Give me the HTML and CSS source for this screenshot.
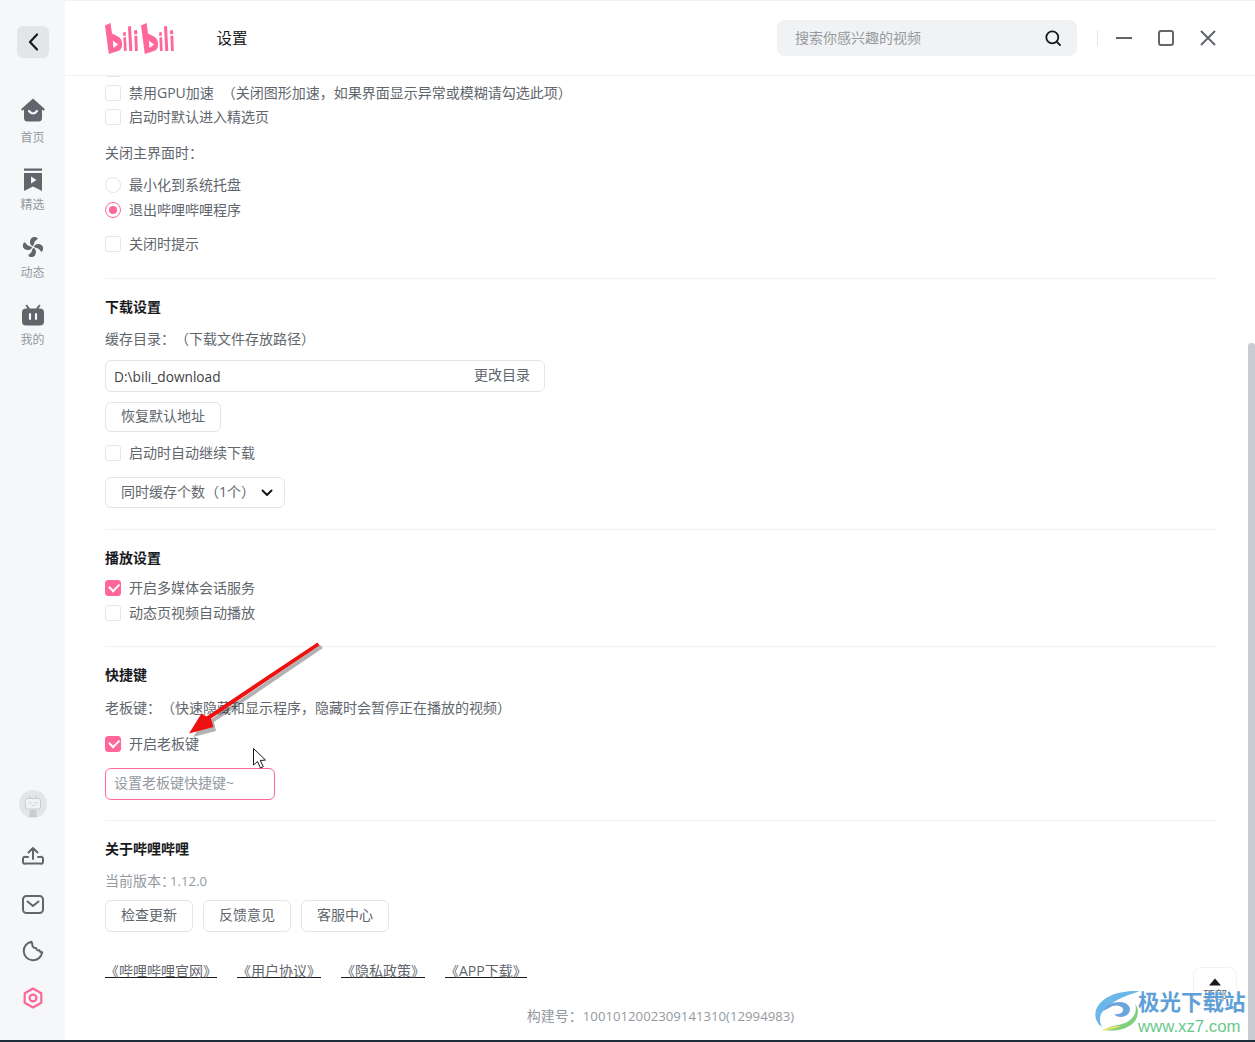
FILE: index.html
```html
<!DOCTYPE html>
<html lang="zh-CN">
<head>
<meta charset="utf-8">
<title>设置</title>
<link rel="stylesheet" href="styles.css">
</head>
<body>
<div class="app">
  <aside class="sidebar">
    <button class="back"><svg width="32" height="32" viewBox="0 0 32 32"><path d="M20 8.500 13 16l7 7.500" fill="none" stroke="#18191c" stroke-width="2.200" stroke-linecap="round" stroke-linejoin="round"/></svg></button>
    <nav class="nav">
      <a class="nav-item"><svg class="up" width="28" height="28" viewBox="0 0 28 28"><path d="M14 2.500 2 13.200l1.500 1.600L5 13.600V22a3.500 3.500 0 0 0 3.500 3.500h11A3.500 3.500 0 0 0 23 22v-8.400l1.500 1.200L26 13.200Z" fill="#61666d"/><path d="M10 15q4 5 8 0" fill="none" stroke="#f6f7f9" stroke-width="2.200" stroke-linecap="round"/></svg><span>首页</span></a>
      <a class="nav-item"><svg class="down" width="28" height="28" viewBox="0 0 28 28"><path d="M5 2.500h18v2.300H5zM5 7h18v18l-9-4.500L5 25z" fill="#61666d"/><path d="M12 10.500v7l5.500-3.500z" fill="#f6f7f9"/></svg><span>精选</span></a>
      <a class="nav-item"><svg class="down" width="28" height="28" viewBox="0 0 28 28"><g fill="#61666d" transform="translate(14 14) scale(.84) translate(-14 -14)"><path d="M13.500 13C10 11 9.500 7 12 3.500c2-2.500 7-1.500 7.500 0 .4 1.600-3.500 3-4 5-.3 1.500-.5 3-2 4.500Z"/><path d="M15 13.500c2-3.500 6-4 9.500-1.500 2.500 2 1.500 7 0 7.500-1.600.4-3-3.500-5-4-1.500-.3-3-.5-4.500-2Z"/><path d="M14.500 15c3.500 2 4 6 1.500 9.500-2 2.500-7 1.500-7.500 0-.4-1.600 3.500-3 4-5 .3-1.500.5-3 2-4.500Z"/><path d="M13 14.500c-2 3.500-6 4-9.500 1.500-2.500-2-1.500-7 0-7.500 1.600-.4 3 3.500 5 4 1.500.3 3 .5 4.500 2Z"/></g></svg><span>动态</span></a>
      <a class="nav-item"><svg class="down" width="28" height="28" viewBox="0 0 28 28"><path d="M8 3.500 11 7.500h6l3-4 1.500 1L19.500 7.500H21a4 4 0 0 1 4 4V20.500a4 4 0 0 1-4 4H7a4 4 0 0 1-4-4v-9a4 4 0 0 1 4-4h1.500l-2-3Z" fill="#61666d"/><path d="M11 13v5M17 13v5" stroke="#f6f7f9" stroke-width="2.200" stroke-linecap="round"/></svg><span>我的</span></a>
    </nav>
    <div class="tools">
      <div class="avatar"><svg width="28" height="28" viewBox="0 0 28 28"><circle cx="14" cy="14" r="14" fill="#e3e5e7"/><path d="M10 6l2 2.500M18 6l-2 2.500" stroke="#c9ccd0" stroke-width="1.200"/><rect x="6.500" y="8.500" width="15" height="10.500" rx="2" fill="#f1f2f3" stroke="#c9ccd0"/><path d="M9.500 13h3M15.500 13h3M12.500 15.500h3" stroke="#c9ccd0"/><path d="M10 27l1-7h6l1 7z" fill="#c9ccd0"/></svg></div>
      <div class="tool"><svg width="24" height="24" viewBox="0 -2 24 24"><path d="M12 15V4M7.500 8.500 12 4l4.500 4.500M7 13H4.500A1.800 1.800 0 0 0 2 15v2.800A1.800 1.800 0 0 0 4.500 19.600h15a1.800 1.800 0 0 0 2.500-1.800V15a1.800 1.800 0 0 0-2.500-2H17" fill="none" stroke="#61666d" stroke-width="2" stroke-linecap="round" stroke-linejoin="round"/></svg></div>
      <div class="tool"><svg width="24" height="24" viewBox="0 -2 24 24"><rect x="2" y="4" width="20" height="17" rx="3.500" fill="none" stroke="#61666d" stroke-width="2"/><path d="M6.500 9.500 12 14l5.500-4.500" fill="none" stroke="#61666d" stroke-width="2" stroke-linecap="round" stroke-linejoin="round"/></svg></div>
      <div class="tool"><svg width="24" height="24" viewBox="0 -1 24 24"><path d="M10.500 2.800a9.300 9.300 0 1 0 10.700 10.500c-1.500 0-2.500-.8-2.700-2-1.800.4-3.300-.6-3.500-2.300-2 .2-3.700-1.200-3.700-3.200 0-1 0-2-.8-3Z" fill="none" stroke="#61666d" stroke-width="2" stroke-linejoin="round"/></svg></div>
      <div class="tool"><svg width="24" height="24" viewBox="0 0 24 24"><path d="M12 2.500 20.300 7.200v9.600L12 21.500 3.700 16.800V7.200Z" fill="none" stroke="#ff6699" stroke-width="2.200" stroke-linejoin="round"/><circle cx="12" cy="12" r="3.400" fill="none" stroke="#ff6699" stroke-width="2.200"/></svg></div>
    </div>
  </aside>

  <main class="main">
    <header class="topbar">
      <svg class="logo" width="70" height="32" viewBox="0 0 70 32"><g fill="#ff6699"><g id="bili"><path fill-rule="evenodd" d="M0 2.500 5.500 0 7 10.500 13 13.500Q17.500 16 17 22.500 16.500 27 13 28L3.800 31ZM7.800 17.500 8.500 25 13 21.500Z"/><path d="M18 9.500 20.700 9 21 12.500 18.300 13ZM18.400 14.500 21 14 21.700 28H19ZM23 3.500 26 3 27.300 28H24.300ZM29 7.500 32 7 32.300 11 29.300 11.500ZM29.400 13 32.300 12.500 32.800 28H30Z"/></g><use href="#bili" x="36"/></g></svg>
      <h1 class="page-title">设置</h1>
      <div class="search"><span>搜索你感兴趣的视频</span><svg width="20" height="20" viewBox="0 0 20 20"><circle cx="9.300" cy="9.300" r="6" fill="none" stroke="#18191c" stroke-width="1.800"/><path d="m13.800 13.800 3.200 3.200" stroke="#18191c" stroke-width="1.800" stroke-linecap="round"/></svg></div>
      <i class="divider"></i>
      <div class="win">
        <svg width="16" height="16" viewBox="0 0 16 16"><path d="M0 8h16" stroke="#61666d" stroke-width="2"/></svg>
        <svg width="16" height="16" viewBox="0 0 16 16"><rect x="1" y="1" width="14" height="14" rx="2" fill="none" stroke="#61666d" stroke-width="2"/></svg>
        <svg width="16" height="16" viewBox="0 0 16 16"><path d="m1 1 14 14M15 1 1 15" stroke="#61666d" stroke-width="2"/></svg>
      </div>
    </header>

    <div class="content">
      <div class="scroller">
        <label class="row"><span class="box"></span></label>
        <label class="row"><span class="box"></span><span>禁用GPU加速<span class="note">（关闭图形加速，如果界面显示异常或模糊请勾选此项）</span></span></label>
        <label class="row"><span class="box"></span>启动时默认进入精选页</label>
        <p class="line sp-12">关闭主界面时：</p>
        <label class="row row-25 sp-7"><span class="box round"></span>最小化到系统托盘</label>
        <label class="row row-25"><span class="box round on"></span>退出哔哩哔哩程序</label>
        <label class="row sp-10"><span class="box"></span>关闭时提示</label>
        <hr class="rule">

        <h2 class="heading">下载设置</h2>
        <p class="line sp-8">缓存目录：（下载文件存放路径）</p>
        <div class="field dir sp-9"><span class="path latin">D:\bili_download</span><span>更改目录</span></div>
        <button class="btn h30 sp-10">恢复默认地址</button>
        <label class="row sp-9"><span class="box"></span>启动时自动继续下载</label>
        <div class="select sp-12"><span>同时缓存个数（1个）</span><svg width="12" height="8" viewBox="0 0 12 8"><path d="m1.500 1.500 4.500 4.500 4.500-4.500" fill="none" stroke="#18191c" stroke-width="2" stroke-linecap="round" stroke-linejoin="round"/></svg></div>
        <hr class="rule r21">

        <h2 class="heading">播放设置</h2>
        <label class="row row-25 sp-5"><span class="box tick"></span>开启多媒体会话服务</label>
        <label class="row row-25"><span class="box"></span>动态页视频自动播放</label>
        <hr class="rule r21">

        <h2 class="heading">快捷键</h2>
        <p class="line sp-9">老板键：（快速隐藏和显示程序，隐藏时会暂停正在播放的视频）</p>
        <label class="row sp-12"><span class="box tick"></span>开启老板键</label>
        <div class="field boss sp-12">设置老板键快捷键~</div>
        <hr class="rule r20">

        <h2 class="heading">关于哔哩哔哩</h2>
        <p class="line muted sp-8">当前版本<span class="trim">：</span><span class="latin">1.12.0</span></p>
        <div class="btn-row sp-7">
          <button class="btn">检查更新</button>
          <button class="btn">反馈意见</button>
          <button class="btn">客服中心</button>
        </div>
        <div class="links">
          <a>《哔哩哔哩官网》</a><a>《用户协议》</a><a>《隐私政策》</a><a>《APP下载》</a>
        </div>
        <p class="build">构建号：<span class="latin">1001012002309141310(12994983)</span></p>
      </div>
    </div>
  </main>
</div>

<div class="scrollbar"></div>
<div class="to-top"><svg width="14" height="8" viewBox="0 0 14 8"><path d="M7 .5 13 7.500H1Z" fill="#18191c"/></svg><span>顶部</span></div>

<svg class="annot" width="1255" height="1042" viewBox="0 0 1255 1042">
  <path d="M323 648 214 722 216 731 193 737 205 719 210 720 320 645Z" fill="#000" opacity=".3"/>
  <path d="M317.500 642.500 319.500 645.500 211 718.500 213.500 727 189 733.500 201.500 713.500 206.500 716.500Z" fill="#ee1111"/>
  <path d="M253.500 748.500V765l4-3.500 3 6.500 2.800-1.300-3-6.200 5.200-.5Z" fill="#fff" stroke="#18191c" stroke-width="1"/>
</svg>

<div class="mark">
  <svg width="46" height="42" viewBox="0 0 46 42"><path d="M45 1C25 0 6 6 1 20c-2 7 1 14 6 17 -3-6-3-12 2-17C17 11 30 6 45 1Z" fill="#6bb7ea"/><path d="M14 18c5-4 13-3 14 1 1 3-3 6-9 5 3 4 11 4 15-1 3-5-1-11-9-11-8 0-14 3-17 9Z" fill="#6aa4dd"/><path d="M40 14c3 8-2 17-13 20-7 2-13 2-18 6 12 2 25-1 31-9 4-6 4-13 0-17Z" fill="#7ed07f"/><path d="M6 41c6-1 14-2 20-5-6 0-14 1-20 5Z" fill="#f0e26b"/></svg>
  <div class="mark-text"><b>极光下载站</b><span>www.xz7.com</span></div>
</div>
<div class="taskbar"></div>
</body>
</html>
```
FILE: styles.css
```css
* { box-sizing: border-box; }
html, body { margin: 0; height: 100%; overflow: hidden; }
body {
  width: 1255px;
  height: 1042px;
  position: relative;
  background: #fff;
  font: 14px/24px "Open Sans", "Noto Sans CJK SC", sans-serif;
  color: #61666d;
  text-spacing-trim: space-all;
}
.app { display: flex; height: 1040px; }
.latin { font-size: 13.2px; }
.trim { letter-spacing: -5px; }

/* sidebar */
.sidebar {
  width: 65px;
  flex: none;
  background: #f6f7f9;
  display: flex;
  flex-direction: column;
  align-items: center;
  padding-top: 26px;
}
.back {
  width: 32px;
  height: 32px;
  padding: 0;
  border: 0;
  border-radius: 6px;
  background: #e3e5e7;
  display: block;
}
.back svg { display: block; }
.nav { margin-top: 38px; display: flex; flex-direction: column; width: 100%; }
.nav-item {
  height: 67.5px;
  display: flex;
  flex-direction: column;
  align-items: center;
  font-size: 12px;
  line-height: 16px;
  color: #9499a0;
}
.nav-item svg { display: block; flex: none; }
.nav-item svg.up { margin-bottom: 6px; }
.nav-item svg.down { margin-top: 2px; margin-bottom: 3.500px; }
.tools { margin-top: auto; padding-bottom: 18px; width: 100%; display: flex; flex-direction: column; align-items: center; }
.avatar { height: 48px; margin-bottom: 2px; display: flex; align-items: center; }
.avatar svg { display: block; }
.tool { height: 48px; display: flex; align-items: center; }
.tool svg { display: block; }

/* main */
.main { flex: 1; min-width: 0; display: flex; flex-direction: column; border-top: 1px solid #f1f2f3; }
.topbar {
  height: 75px;
  flex: none;
  display: flex;
  align-items: center;
  padding: 0 39px 0 40px;
  border-bottom: 1px solid #f1f2f3;
}
.logo { display: block; flex: none; margin-top: 1px; }
.page-title { margin: 0 0 1px 41.500px; font-size: 15.500px; font-weight: 400; color: #18191c; }
.search {
  margin-left: auto;
  width: 300px;
  height: 36px;
  padding: 0 14px 0 18px;
  border-radius: 8px;
  background: #f1f2f3;
  display: flex;
  align-items: center;
  justify-content: space-between;
  color: #9499a0;
}
.divider { width: 1px; height: 16px; margin-left: 20px; background: #e3e5e7; }
.win { margin-left: 18px; display: flex; gap: 26px; }
.win svg { display: block; }

.content { flex: 1; min-height: 0; overflow: hidden; padding: 0 39px 0 40px; }
.scroller { margin-top: -19px; }
.row { display: flex; align-items: center; gap: 8px; height: 24px; }
.row-25 { height: 25px; }
.note { margin-left: 8px; }
.box { width: 16px; height: 16px; flex: none; border: 1px solid #e3e5e7; border-radius: 3px; position: relative; }
.round { border-radius: 50%; }
.on { border-color: #ff6699; }
.on::after { content: ""; position: absolute; left: 3px; top: 3px; width: 8px; height: 8px; border-radius: 50%; background: #ff6699; }
.tick { background: #ff6699; border-color: #ff6699; }
.tick::after {
  content: "";
  position: absolute;
  left: 2.500px;
  top: 2px;
  width: 8px;
  height: 4.500px;
  border-left: 2px solid #fff;
  border-bottom: 2px solid #fff;
  transform: rotate(-45deg);
}
.line { margin: 0; height: 24px; }
.muted { color: #9499a0; }
.sp-5 { margin-top: 5px; }
.sp-7 { margin-top: 7px; }
.sp-8 { margin-top: 8px; }
.sp-9 { margin-top: 9px; }
.sp-10 { margin-top: 10px; }
.sp-12 { margin-top: 12px; }
.rule { margin: 22px 0 0; border: 0; height: 1px; background: #f1f2f3; }
.r21 { margin-top: 21px; }
.r20 { margin-top: 20px; }
.heading { margin: 16px 0 0; height: 24px; font-size: 14px; line-height: 24px; font-weight: 700; color: #18191c; }
.field {
  height: 32px;
  border: 1px solid #e3e5e7;
  border-radius: 6px;
  display: flex;
  align-items: center;
  padding: 0 8px 2px;
}
.dir { width: 440px; justify-content: space-between; padding-right: 14px; }
.path { color: #18191c; padding-top: 4px; opacity: .85; font-size: 13.700px; }
.boss { width: 170px; border-color: #ff6699; color: #9499a0; }
.btn {
  display: block;
  height: 32px;
  padding: 0 15px 2px;
  border: 1px solid #e3e5e7;
  border-radius: 6px;
  background: #fff;
  font: inherit;
  color: #61666d;
}
.h30 { height: 30px; }
.btn-row { display: flex; gap: 10px; }
.select {
  width: 180px;
  height: 31px;
  border: 1px solid #e3e5e7;
  border-radius: 6px;
  padding: 0 11px 2px 15px;
  display: flex;
  align-items: center;
  justify-content: space-between;
}
.select svg { margin-top: 2px; }
.links { margin-top: 27px; display: flex; gap: 20px; height: 24px; }
.links a { display: block; height: 19px; line-height: 24px; border-bottom: 1px solid #18191c; }
.build { margin: 21px 0 0; height: 24px; text-align: center; color: #9499a0; }

/* overlays */
.scrollbar { position: absolute; right: 0; top: 343px; bottom: 2px; width: 7px; background: #c9ccd0; border-radius: 3px 3px 0 0; }
.to-top {
  position: absolute;
  left: 1193px;
  top: 967px;
  width: 44px;
  height: 42px;
  border: 1px solid #f1f2f3;
  border-radius: 8px;
  background: #fff;
  display: flex;
  flex-direction: column;
  align-items: center;
  padding-top: 10px;
  font-size: 12px;
  line-height: 16px;
  color: #61666d;
}
.to-top svg { display: block; margin-bottom: 2px; }
.annot { position: absolute; left: 0; top: 0; pointer-events: none; }
.mark { position: absolute; left: 1095px; top: 990px; display: flex; }
.mark svg { display: block; flex: none; }
.mark-text { display: flex; flex-direction: column; margin-left: -3px; }
.mark-text b { font-size: 21.500px; line-height: 24px; font-weight: 700; color: #5f9fd8; white-space: nowrap; text-shadow: 0 0 2px #fff; }
.mark-text span { font: 16.800px/20px "Liberation Sans", sans-serif; margin-top: 3px; color: #68c98a; white-space: nowrap; text-shadow: 0 0 2px #fff; }
.taskbar { position: absolute; left: 0; right: 0; bottom: 0; height: 2px; background: #1f2d38; }
```
